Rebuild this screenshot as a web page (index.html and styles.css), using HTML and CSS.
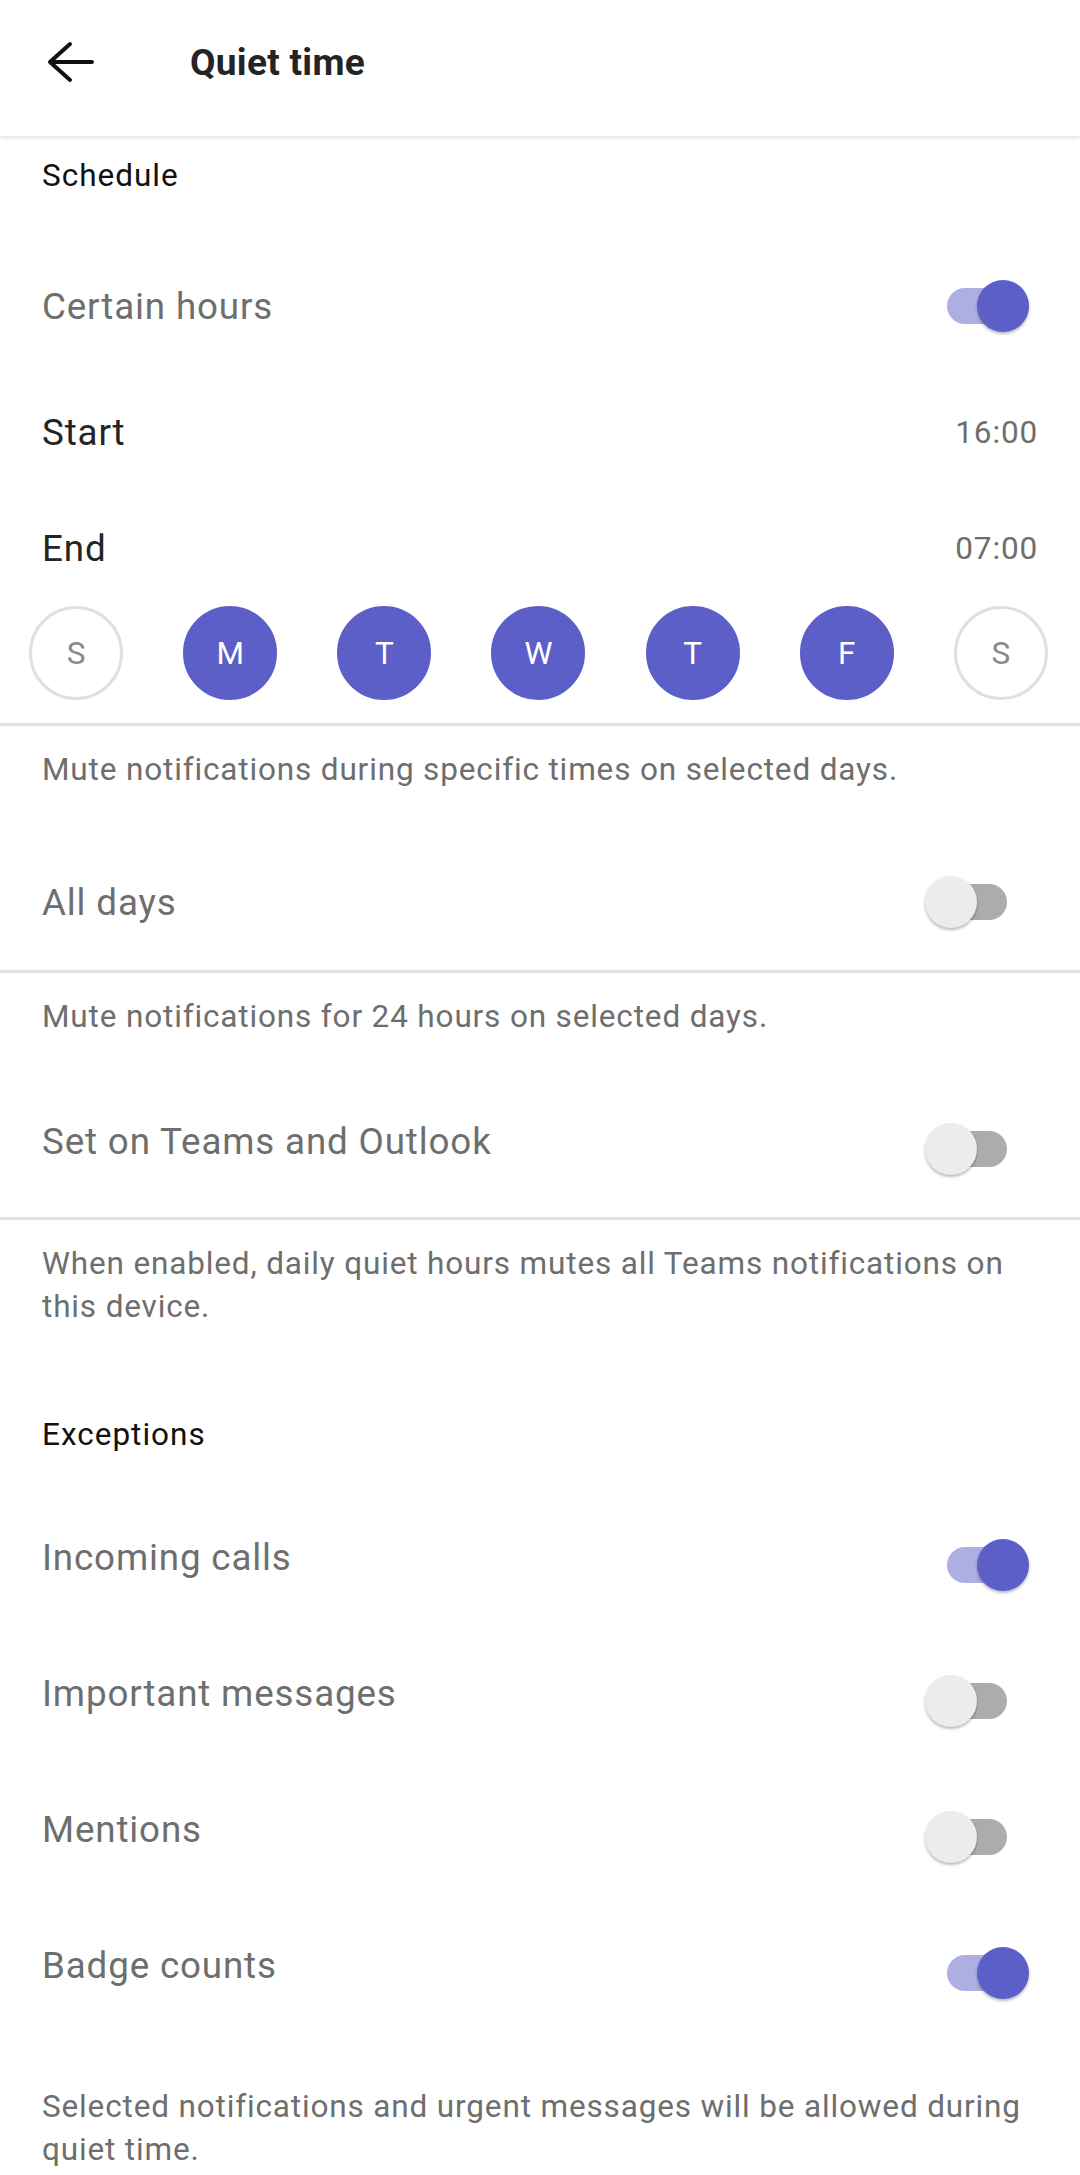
FILE: index.html
```html
<!DOCTYPE html>
<html lang="en">
<head>
    <meta charset="UTF-8">
    <meta name="viewport" content="width=device-width, initial-scale=1.0">
    <title>Quiet time</title>
    <link rel="stylesheet" href="styles.css">
</head>
<body>
    <header class="app-bar">
        <svg class="back-icon" width="56" height="56" viewBox="0 0 56 56" aria-hidden="true">
            <path d="M49 28H7M27 10L7 28l20 18" fill="none" stroke="#111" stroke-width="4" stroke-linecap="round" stroke-linejoin="round"/>
        </svg>
        <h1 class="app-bar-title">Quiet time</h1>
    </header>

    <main class="settings">
        <h2 class="section-title">Schedule</h2>

        <div class="row">
            <span class="row-label">Certain hours</span>
            <span class="switch is-on"><span class="switch-track"></span><span class="switch-thumb"></span></span>
        </div>
        <div class="row row-time">
            <span class="row-label dark">Start</span>
            <span class="row-value">16:00</span>
        </div>
        <div class="row row-time">
            <span class="row-label dark">End</span>
            <span class="row-value">07:00</span>
        </div>

        <div class="days">
            <span class="day">S</span>
            <span class="day is-selected">M</span>
            <span class="day is-selected">T</span>
            <span class="day is-selected">W</span>
            <span class="day is-selected">T</span>
            <span class="day is-selected">F</span>
            <span class="day">S</span>
        </div>
        <hr class="divider">
        <p class="hint">Mute notifications during specific times on selected days.</p>

        <div class="row">
            <span class="row-label">All days</span>
            <span class="switch"><span class="switch-track"></span><span class="switch-thumb"></span></span>
        </div>
        <hr class="divider">
        <p class="hint">Mute notifications for 24 hours on selected days.</p>

        <div class="row row-raised">
            <span class="row-label">Set on Teams and Outlook</span>
            <span class="switch"><span class="switch-track"></span><span class="switch-thumb"></span></span>
        </div>
        <hr class="divider">
        <p class="hint">When enabled, daily quiet hours mutes all Teams notifications on this device.</p>

        <h2 class="section-title">Exceptions</h2>

        <div class="row row-raised">
            <span class="row-label">Incoming calls</span>
            <span class="switch is-on"><span class="switch-track"></span><span class="switch-thumb"></span></span>
        </div>
        <div class="row row-raised">
            <span class="row-label">Important messages</span>
            <span class="switch"><span class="switch-track"></span><span class="switch-thumb"></span></span>
        </div>
        <div class="row row-raised">
            <span class="row-label">Mentions</span>
            <span class="switch"><span class="switch-track"></span><span class="switch-thumb"></span></span>
        </div>
        <div class="row row-raised">
            <span class="row-label">Badge counts</span>
            <span class="switch is-on"><span class="switch-track"></span><span class="switch-thumb"></span></span>
        </div>

        <p class="hint hint-last">Selected notifications and urgent messages will be allowed during quiet time.</p>
    </main>
</body>
</html>
```

FILE: styles.css
```css
html, body {
    margin: 0;
    padding: 0;
    overflow: hidden;
}
body {
    font-family: Roboto, "Noto Sans", Arial, sans-serif;
    background: #fff;
    color: #242424;
    letter-spacing: 0.85px;
}

/* top bar */
.app-bar {
    position: relative;
    z-index: 1;
    height: 136px;
    box-sizing: border-box;
    padding: 0 0 12px 43px;
    display: flex;
    align-items: center;
    background: #fff;
    box-shadow: 0 2px 4px rgba(0, 0, 0, 0.12);
}
.back-icon {
    flex: none;
}
.app-bar-title {
    margin: 0 0 0 91px;
    font-size: 37px;
    font-weight: 700;
    letter-spacing: 0.3px;
    color: #242424;
}

/* content (scrolled a little under the bar) */
.settings {
    margin-top: -24px;
}
.section-title {
    height: 126px;
    margin: 0;
    padding: 0 42px;
    display: flex;
    align-items: center;
    font-size: 31.5px;
    font-weight: 400;
    letter-spacing: 1px;
    color: #111;
}
.row {
    height: 136px;
    padding: 0 42px;
    display: flex;
    align-items: center;
    justify-content: space-between;
}
.row-time {
    height: 116px;
}
.row-raised .row-label {
    padding-bottom: 16px;
}
.row-label {
    font-size: 36.75px;
    color: #6e6e6e;
}
.row-label.dark {
    color: #242424;
}
.row-value {
    font-size: 31.5px;
    color: #6e6e6e;
}

/* switch */
.switch {
    position: relative;
    flex: none;
    width: 104px;
    height: 52px;
    margin-right: 9px;
}
.switch-track {
    position: absolute;
    left: 22px;
    top: 8px;
    width: 60px;
    height: 36px;
    border-radius: 18px;
    background: #acacac;
}
.switch-thumb {
    position: absolute;
    left: 0;
    top: 0;
    width: 52px;
    height: 52px;
    border-radius: 50%;
    background: #ececec;
    box-shadow: 0 2px 3px rgba(0, 0, 0, 0.28);
}
.switch.is-on .switch-track {
    background: #adafe2;
}
.switch.is-on .switch-thumb {
    left: 52px;
    background: #5b5fc7;
}

/* days of week */
.days {
    display: flex;
    justify-content: space-between;
    padding: 0 32px 23px 29px;
}
.day {
    width: 94px;
    height: 94px;
    box-sizing: border-box;
    border: 3px solid #e0e0e0;
    border-radius: 50%;
    display: flex;
    align-items: center;
    justify-content: center;
    font-size: 31.5px;
    letter-spacing: 0;
    color: #8a8a8a;
}
.day.is-selected {
    background: #5b5fc7;
    border-color: #5b5fc7;
    color: #fff;
}

.divider {
    height: 3px;
    margin: 0;
    border: 0;
    background: #e1e1e1;
}
.hint {
    margin: 0;
    padding: 22px 42px 43px;
    font-size: 31.5px;
    line-height: 43px;
    color: #6e6e6e;
}
.hint-last {
    padding-top: 44px;
    padding-bottom: 0;
}
```
